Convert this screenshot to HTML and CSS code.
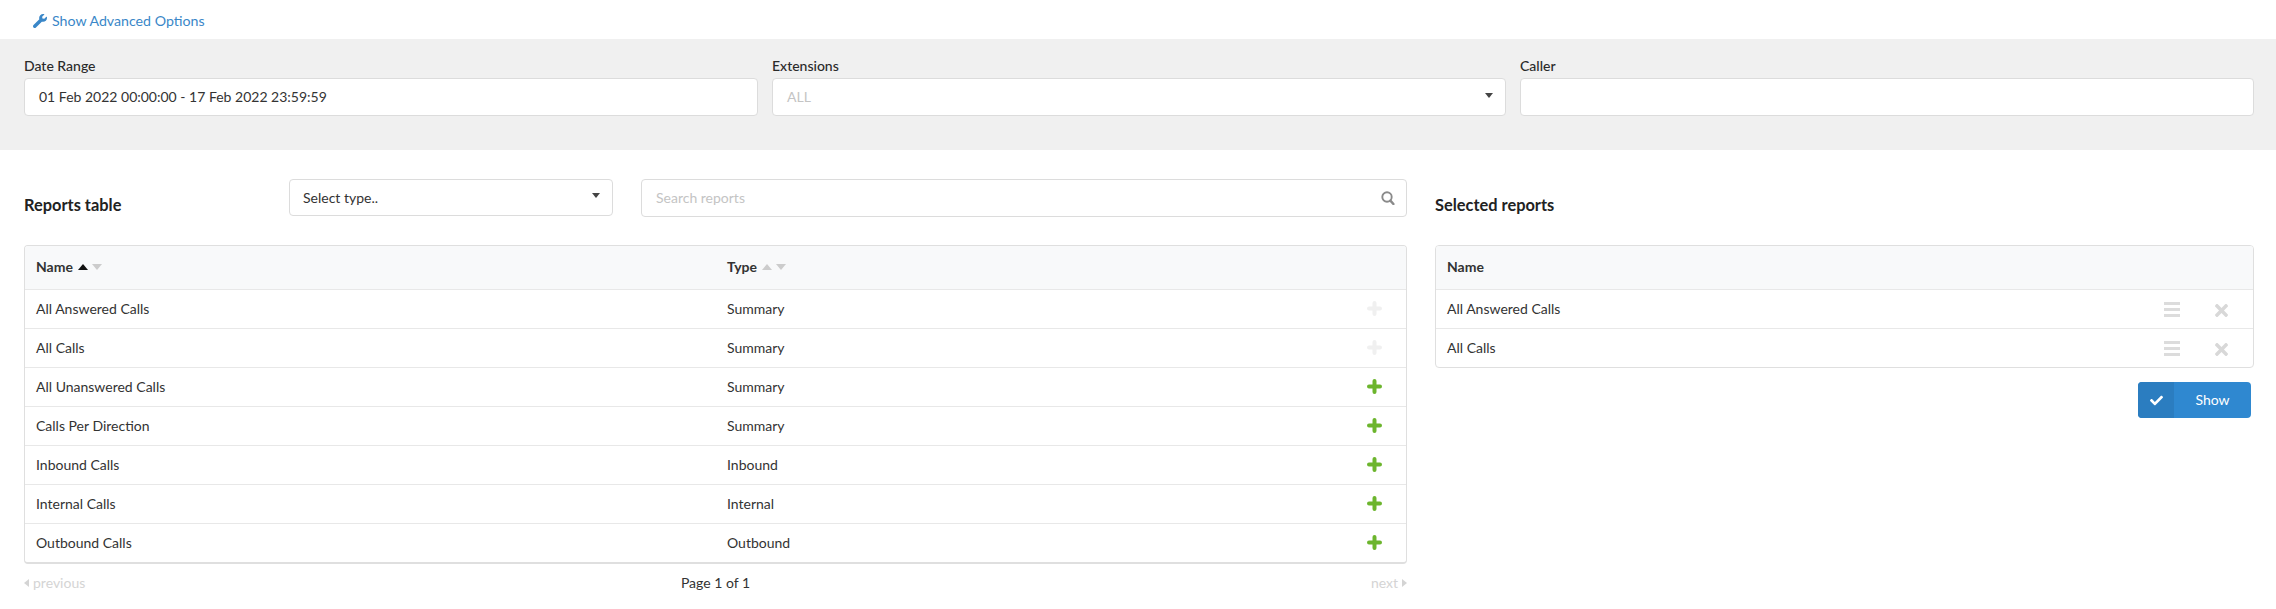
FILE: index.html
```html
<!DOCTYPE html>
<html lang="en">
<head>
<meta charset="utf-8">
<title>Reports</title>
<link rel="stylesheet" href="styles.css">
</head>
<body>
<svg class="sprite" width="0" height="0" aria-hidden="true">
  <symbol id="i-plus" viewBox="0 0 15 15"><path d="M7.5 2v11M2 7.5h11" fill="none" stroke="currentColor" stroke-width="4" stroke-linecap="round"/></symbol>
  <symbol id="i-bars" viewBox="0 0 16 15"><path d="M0 0h16v3H0zM0 6h16v3H0zM0 12h16v3H0z" fill="currentColor"/></symbol>
  <symbol id="i-x" viewBox="0 80 352 352"><path fill="currentColor" d="M242.72 256l100.07-100.07c12.28-12.28 12.28-32.19 0-44.48l-22.24-22.24c-12.28-12.28-32.19-12.28-44.48 0L176 189.28 75.93 89.21c-12.28-12.28-32.19-12.28-44.48 0L9.21 111.45c-12.28 12.28-12.28 32.19 0 44.48L109.28 256 9.21 356.07c-12.28 12.28-12.28 32.19 0 44.48l22.24 22.24c12.28 12.28 32.2 12.28 44.48 0L176 322.72l100.07 100.07c12.28 12.28 32.2 12.28 44.48 0l22.24-22.24c12.28-12.28 12.28-32.19 0-44.48L242.72 256z"/></symbol>
</svg>

<div class="advanced">
  <a class="advanced-link" href="#">
    <svg class="wrench" viewBox="0 0 512 512"><path fill="currentColor" d="M507.73 109.1c-2.24-9.03-13.54-12.09-20.12-5.51l-74.36 74.36-67.88-11.31-11.31-67.88 74.36-74.36c6.62-6.62 3.43-17.9-5.66-20.16-47.38-11.74-99.55.91-136.58 37.93-39.64 39.64-50.55 97.1-34.05 147.2L18.74 402.76c-24.99 24.99-24.99 65.51 0 90.5 24.99 24.99 65.51 24.99 90.5 0l213.21-213.21c50.12 16.71 107.47 5.68 147.37-34.22 37.07-37.07 49.7-89.32 37.91-136.73z"/></svg>
    Show Advanced Options
  </a>
</div>

<section class="filters">
  <div class="field">
    <label>Date Range</label>
    <div class="control">01 Feb 2022 00:00:00 - 17 Feb 2022 23:59:59</div>
  </div>
  <div class="field">
    <label>Extensions</label>
    <div class="control muted">ALL<span class="caret"></span></div>
  </div>
  <div class="field">
    <label>Caller</label>
    <div class="control"></div>
  </div>
</section>

<main class="reports">
  <section class="col-left">
    <div class="toolbar">
      <h2 class="title">Reports table</h2>
      <div class="control select">Select type..<span class="caret"></span></div>
      <div class="control search"><span class="muted">Search reports</span>
        <svg class="search-icon" viewBox="0 0 14 14"><circle cx="6" cy="6" r="4.7" fill="none" stroke="currentColor" stroke-width="1.9"/><path d="M9.4 9.6l3 3.4" fill="none" stroke="currentColor" stroke-width="2.4" stroke-linecap="round"/></svg>
      </div>
    </div>
    <div class="table">
      <div class="row head cols-3">
        <div>Name<span class="sort"><i class="up on"></i><i class="down"></i></span></div>
        <div>Type<span class="sort"><i class="up"></i><i class="down"></i></span></div>
        <div></div>
      </div>
      <div class="row cols-3"><div>All Answered Calls</div><div>Summary</div><svg class="plus off"><use href="#i-plus"/></svg></div>
      <div class="row cols-3"><div>All Calls</div><div>Summary</div><svg class="plus off"><use href="#i-plus"/></svg></div>
      <div class="row cols-3"><div>All Unanswered Calls</div><div>Summary</div><svg class="plus"><use href="#i-plus"/></svg></div>
      <div class="row cols-3"><div>Calls Per Direction</div><div>Summary</div><svg class="plus"><use href="#i-plus"/></svg></div>
      <div class="row cols-3"><div>Inbound Calls</div><div>Inbound</div><svg class="plus"><use href="#i-plus"/></svg></div>
      <div class="row cols-3"><div>Internal Calls</div><div>Internal</div><svg class="plus"><use href="#i-plus"/></svg></div>
      <div class="row cols-3"><div>Outbound Calls</div><div>Outbound</div><svg class="plus"><use href="#i-plus"/></svg></div>
    </div>
    <div class="pager">
      <span class="pager-link"><i class="tri-left"></i>previous</span>
      <span class="pager-info">Page 1 of 1</span>
      <span class="pager-link pager-next">next<i class="tri-right"></i></span>
    </div>
  </section>

  <section class="col-right">
    <div class="toolbar">
      <h2 class="title">Selected reports</h2>
    </div>
    <div class="table">
      <div class="row head cols-sel"><div>Name</div></div>
      <div class="row cols-sel"><div>All Answered Calls</div><svg class="bars"><use href="#i-bars"/></svg><svg class="cross"><use href="#i-x"/></svg></div>
      <div class="row cols-sel"><div>All Calls</div><svg class="bars"><use href="#i-bars"/></svg><svg class="cross"><use href="#i-x"/></svg></div>
    </div>
    <div class="actions">
      <button class="show" type="button">
        <span class="show-icon"><svg viewBox="0 0 512 512"><path fill="currentColor" d="M173.898 439.404l-166.4-166.4c-9.997-9.997-9.997-26.206 0-36.204l36.203-36.204c9.997-9.998 26.207-9.998 36.204 0L192 312.69 432.095 72.596c9.997-9.997 26.207-9.997 36.204 0l36.203 36.204c9.997 9.997 9.997 26.206 0 36.204l-294.4 294.401c-9.998 9.997-26.207 9.997-36.204-.001z"/></svg></span>
        <span class="show-label">Show</span>
      </button>
    </div>
  </section>
</main>
</body>
</html>
```
FILE: styles.css
```css
* { box-sizing: border-box; }
html, body { margin: 0; padding: 0; }
body {
  background: #fff;
  color: #333;
  font-family: Lato, "Liberation Sans", sans-serif;
  font-size: 14px;
  line-height: 20px;
  height: 609px;
  overflow: hidden;
}
.sprite { position: absolute; }

.advanced { height: 39px; padding: 11px 0 0 33px; }
.advanced-link { display: flex; align-items: center; gap: 5px; color: #3a87c8; text-decoration: none; font-size: 14.2px; }
.wrench { width: 14px; height: 14px; }

.filters {
  height: 111px;
  background: #f0f0f0;
  padding: 15px 22px 0 24px;
  display: grid;
  grid-template-columns: repeat(3, 1fr);
  column-gap: 14px;
  align-content: start;
}
.field label { display: block; font-weight: 500; font-size: 14px; line-height: 24px; color: #2a2a2a; }
.control {
  position: relative;
  height: 38px;
  padding: 8px 14px;
  background: #fff;
  border: 1px solid #dcdcdc;
  border-radius: 4px;
  color: #333;
}
.muted { color: #c4c4c4; }
.caret {
  position: absolute;
  top: 14px;
  right: 12px;
  border-left: 4px solid transparent;
  border-right: 4px solid transparent;
  border-top: 5px solid #444;
}

.reports {
  display: flex;
  gap: 28px;
  padding: 29px 22px 0 24px;
}
.col-left { width: 1383px; }
.col-right { flex: 1; }
.toolbar { display: flex; align-items: flex-start; height: 66px; }
.title { margin: 15px 0 0; width: 265px; font-size: 16.4px; font-weight: 700; line-height: 22px; color: #222; }
.select { width: 324px; height: 37px; padding-left: 13px; }
.select .caret { top: 13px; }
.search { flex: 1; margin-left: 28px; display: flex; justify-content: space-between; align-items: center; padding-top: 6px; padding-bottom: 6px; }
.search-icon { width: 14px; height: 14px; color: #8a8a8a; margin-right: -3px; }

.table { border: 1px solid #dfdfdf; border-bottom-width: 2px; border-radius: 4px; overflow: hidden; }
.col-right .table { border-bottom-width: 1px; }
.row {
  display: grid;
  align-items: center;
  height: 39px;
  padding-left: 11px;
  padding-bottom: 1px;
  border-top: 1px solid #e8e8e8;
}
.row.head {
  height: 43px;
  border-top: 0;
  background: #f8f9fa;
  padding-bottom: 2px;
  font-weight: 700;
  color: #333;
}
.cols-3 { grid-template-columns: 691px 1fr 15px; padding-right: 24px; }
.cols-sel { grid-template-columns: 1fr 16px 13px; column-gap: 35px; padding-right: 25px; }
.cols-sel.head { grid-template-columns: 1fr; }
.plus { width: 15px; height: 15px; color: #6cb52d; }
.plus.off { color: #f0f0f0; }
.bars { width: 16px; height: 15px; margin-top: 2px; color: #dcdcdc; }
.cross { width: 13px; height: 13px; margin-top: 3px; color: #d8d8d8; }

.sort { display: inline-flex; gap: 4px; margin-left: 5px; vertical-align: 2px; }
.sort i { display: block; width: 0; height: 0; border-left: 5px solid transparent; border-right: 5px solid transparent; }
.sort .up { border-bottom: 6px solid #ccc; }
.sort .up.on { border-bottom-color: #111; }
.sort .down { border-top: 6px solid #ccc; }

.pager { display: grid; grid-template-columns: 1fr auto 1fr; align-items: center; height: 38px; }
.pager-link { color: #d4d4d4; display: inline-flex; align-items: center; gap: 4px; }
.pager-next { justify-self: end; }
.pager-info { color: #333; }
.tri-left, .tri-right { display: block; width: 0; height: 0; border-top: 4px solid transparent; border-bottom: 4px solid transparent; }
.tri-left { border-right: 5px solid #d4d4d4; }
.tri-right { border-left: 5px solid #d4d4d4; }

.actions { display: flex; justify-content: flex-end; padding: 14px 3px 0 0; }
.show {
  display: flex;
  width: 113px;
  height: 36px;
  padding: 0;
  border: 0;
  border-radius: 4px;
  overflow: hidden;
  background: #2f88d0;
  color: #fff;
  font: inherit;
}
.show-icon { width: 36px; height: 36px; display: flex; align-items: center; justify-content: center; background: #2b7dc0; }
.show-icon svg { width: 13px; height: 13px; }
.show-label { flex: 1; line-height: 36px; font-size: 14px; text-align: center; }
```
